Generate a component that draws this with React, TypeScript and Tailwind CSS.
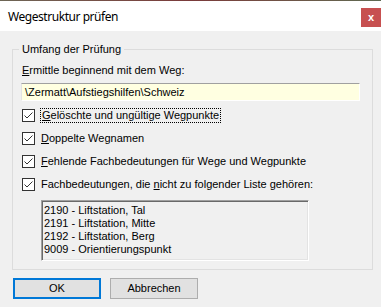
import React from 'react';

const CHECKS: React.ReactNode[] = [
  <span key="a" className="px-[1px] outline outline-1 outline-dotted outline-black"><u>G</u>elöschte und ungültige Wegpunkte</span>,
  <span key="b"><u>D</u>oppelte Wegnamen</span>,
  <span key="c"><u>F</u>ehlende Fachbedeutungen für Wege und Wegpunkte</span>,
  <span key="d">Fachbedeutungen, die <u>n</u>icht zu folgender Liste gehören:</span>,
];

const ITEMS = [
  '2190 - Liftstation, Tal',
  '2191 - Liftstation, Mitte',
  '2192 - Liftstation, Berg',
  '9009 - Orientierungspunkt',
];

function CheckBox() {
  return (
    <span className="flex h-[13px] w-[13px] shrink-0 items-center justify-center border border-[#333333] bg-white">
      <svg width="11" height="11" viewBox="0 0 11 11">
        <polyline points="1.5,5.5 4,8 9.5,2.5" fill="none" stroke="#333333" strokeWidth="1" />
      </svg>
    </span>
  );
}

export default function App() {
  return (
    <div className="relative flex h-[307px] w-[381px] flex-col overflow-hidden bg-[#f0f0f0] text-[11px] leading-[13px] text-black" style={{ fontFamily: '"Liberation Sans", Arial, sans-serif' }}>
      {/* desktop peeking through */}
      <div className="h-[1px] bg-linear-to-r from-[#6d6656] via-[#7a3a3a] to-[#5d6a52]" />

      {/* title bar */}
      <div className="flex h-[30px] items-start justify-between bg-white">
        <span className="pl-[8px] pt-[8px] text-[12px] leading-[16px] tracking-[-0.45px] text-black" style={{ fontFamily: '"Noto Sans", "Open Sans", sans-serif' }}>
          Wegestruktur prüfen
        </span>
        <button className="mt-[7px] flex h-[19px] w-[20px] items-center justify-center bg-[#c75050] text-[11px] font-bold leading-none text-white">
          x
        </button>
      </div>

      {/* group box */}
      <fieldset className="ml-[12px] mt-[12px] w-[361px] border border-[#dcdcdc] p-0">
        <legend className="ml-[6px] px-[3px] leading-[13px]">Umfang der Prüfung</legend>
        <div className="flex flex-col pb-[8px] pl-[8px] pt-[8px]">
          <span className="ml-[1px]"><u>E</u>rmittle beginnend mit dem Weg:</span>
          <div className="mt-[6px] flex h-[18px] w-[339px] items-center border border-t-[#a0a0a0] border-l-[#e3e3e3] border-r-white border-b-white bg-[#ffffe1] pl-[3px]">
            \Zermatt\Aufstiegshilfen\Schweiz
          </div>

          <div className="mt-[8px] flex flex-col gap-[10px]">
            {CHECKS.map((label, i) => (
              <div key={i} className="flex h-[13px] items-center gap-[6px] pl-[1px]">
                <CheckBox />
                {label}
              </div>
            ))}
          </div>

          <div className="ml-[20px] mt-[9px] h-[61px] w-[268px] border border-t-[#a0a0a0] border-l-[#a0a0a0] border-r-white border-b-white pl-[2px] pt-[3px] shadow-[inset_1px_1px_0_#696969,inset_-1px_-1px_0_#e3e3e3]">
            {ITEMS.map(t => (
              <div key={t}>{t}</div>
            ))}
          </div>
        </div>
      </fieldset>

      {/* buttons */}
      <div className="ml-[13px] mt-[8px] flex gap-[9px]">
        <button className="h-[21px] w-[88px] border-2 border-[#0078d7] bg-[#e1e1e1]">OK</button>
        <button className="h-[21px] w-[88px] border border-[#adadad] bg-[#e1e1e1]">Abbrechen</button>
      </div>
    </div>
  );
}
